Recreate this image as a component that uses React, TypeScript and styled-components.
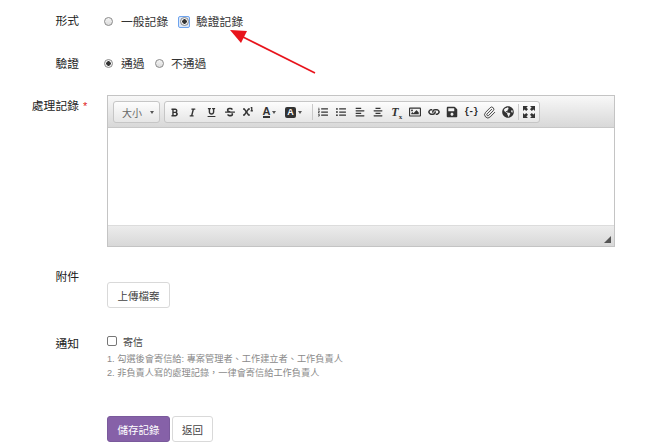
import styled, { createGlobalStyle } from "styled-components";
import {
  FaAlignCenter,
  FaAlignLeft,
  FaBold,
  FaGlobeAmericas,
  FaItalic,
  FaLink,
  FaListOl,
  FaListUl,
  FaRegImage,
  FaSave,
  FaStrikethrough,
  FaSuperscript,
  FaUnderline,
} from "react-icons/fa";
import { Paperclip } from "lucide-react";

const GlobalStyle = createGlobalStyle`
  html, body {
    margin: 0;
    padding: 0;
    background: #fff;
    overflow: hidden;
    font-family: "Liberation Sans", "Noto Sans CJK TC", sans-serif;
  }
`;

const Page = styled.div`
  position: relative;
  width: 647px;
  height: 447px;
  overflow: hidden;
`;

const Form = styled.form`
  display: flex;
  flex-direction: column;
  width: 615px;
  padding-top: 14px;
`;

const Row = styled.div<{ $h: number }>`
  display: grid;
  grid-template-columns: 79px 508px;
  column-gap: 28px;
  height: ${p => p.$h}px;
`;

const Label = styled.div<{ $top?: number }>`
  text-align: right;
  font-size: 11.8px;
  line-height: 15px;
  color: #222;
  position: relative;
  padding-top: ${p => p.$top ?? 0}px;
`;

const Required = styled.span`
  position: absolute;
  left: 83px;
  top: 4px;
  color: #e02020;
  font-size: 11px;
`;

const Options = styled.div`
  display: flex;
  align-items: center;
  height: 13px;
  margin-left: -3px;
`;

const Option = styled.label<{ $w: number; $gap?: number }>`
  display: flex;
  align-items: center;
  gap: ${p => p.$gap ?? 8}px;
  width: ${p => p.$w}px;
  font-size: 11.8px;
  color: #333;

  & > span {
    margin-top: 2px;
  }
`;

const Radio = styled.span<{ $on?: boolean }>`
  box-sizing: border-box;
  flex: none;
  width: 9px;
  height: 9px;
  border-radius: 50%;
  border: 1px solid #8a8a8a;
  background: ${p =>
    p.$on
      ? "radial-gradient(circle, #333 0 2px, #f2f2f2 2.5px)"
      : "linear-gradient(#f4f4f4, #dcdcdc)"};
`;

const FocusRing = styled.span`
  box-sizing: border-box;
  flex: none;
  display: flex;
  align-items: center;
  justify-content: center;
  width: 12px;
  height: 12px;
  border: 1px solid #6ea4ee;
  border-radius: 2px;
  background: #dbe8fa;
`;

const Editor = styled.div`
  box-sizing: border-box;
  height: 152px;
  display: flex;
  flex-direction: column;
  border: 1px solid #c4c4c4;
`;

const Toolbar = styled.div`
  box-sizing: border-box;
  display: flex;
  align-items: center;
  gap: 4px;
  height: 32px;
  padding: 1px 0 0 5px;
  background: linear-gradient(#f8f8f8, #d8d8d8);
  border-bottom: 1px solid #c8c8c8;
`;

const Group = styled.div`
  box-sizing: border-box;
  display: flex;
  align-items: center;
  height: 22px;
  border: 1px solid #c6c6c6;
  border-radius: 3px;
  background: linear-gradient(#fdfdfd, #e6e6e6);
  color: #333;
`;

const SizeSelect = styled(Group)`
  width: 47px;
  padding: 0 5px 0 8px;
  justify-content: space-between;
  font-size: 10px;
  color: #666;
`;

const Caret = styled.span`
  width: 0;
  height: 0;
  border-left: 2.5px solid transparent;
  border-right: 2.5px solid transparent;
  border-top: 3px solid #555;
`;

const Tool = styled.span<{ $w?: number }>`
  display: flex;
  align-items: center;
  justify-content: center;
  gap: 2px;
  width: ${p => p.$w ?? 18.5}px;
  height: 20px;
  flex: none;
  font-size: 10px;
`;

const Sep = styled.span<{ $left: number }>`
  width: 1px;
  height: 16px;
  margin: 0 1px 0 ${p => p.$left}px;
  background: #c9c9c9;
`;

const ColorA = styled.span`
  font-size: 11px;
  font-weight: 700;
  line-height: 10px;
  border-bottom: 2px solid #333;
`;

const BoxA = styled.span`
  width: 11px;
  height: 11px;
  border-radius: 2px;
  background: #333;
  color: #fff;
  font-size: 9px;
  font-weight: 700;
  line-height: 11px;
  text-align: center;
`;

const Braces = styled.span`
  font-size: 9px;
  font-weight: 700;
  font-family: "Liberation Mono", monospace;
  letter-spacing: -1px;
  color: #222;
`;

const ClearFormat = styled.span`
  font-family: "Liberation Serif", serif;
  font-style: italic;
  font-weight: 700;
  font-size: 12px;
  line-height: 12px;
  sub {
    font-size: 7px;
    font-style: normal;
    line-height: 0;
  }
`;

const ChainIcon = styled(FaLink)`
  transform: rotate(45deg);
`;

const EditArea = styled.div`
  flex: 1;
  background: #fff;
`;

const StatusBar = styled.div`
  box-sizing: border-box;
  display: flex;
  align-items: flex-end;
  justify-content: flex-end;
  height: 21px;
  padding: 0 3px 3px 0;
  background: linear-gradient(#ececec, #d8d8d8);
  border-top: 1px solid #dcdcdc;
`;

const Grip = styled.span`
  width: 0;
  height: 0;
  border-left: 7px solid transparent;
  border-bottom: 7px solid #555;
`;

const Button = styled.button<{ $w: number; $h: number; $primary?: boolean }>`
  box-sizing: border-box;
  width: ${p => p.$w}px;
  height: ${p => p.$h}px;
  padding: 0;
  border-radius: 3px;
  border: 1px solid ${p => (p.$primary ? "#7a5a9c" : "#d9d9d9")};
  background: ${p => (p.$primary ? "#8661a8" : "#fff")};
  color: ${p => (p.$primary ? "#fff" : "#444")};
  font-family: inherit;
  font-size: 10.5px;
`;

const UploadCell = styled.div`
  padding-top: 14px;
`;

const Check = styled.label`
  display: flex;
  align-items: center;
  height: 12px;
  font-size: 10px;
  color: #444;
`;

const Box = styled.span`
  box-sizing: border-box;
  width: 10px;
  height: 10px;
  margin-right: 6px;
  border: 1px solid #777;
  border-radius: 2px;
  background: #fff;
`;

const Help = styled.div`
  margin-top: 5px;
  font-size: 9.2px;
  line-height: 14px;
  color: #8a8a8a;
  white-space: nowrap;
`;

const Actions = styled.div`
  display: flex;
  gap: 2px;
`;

const Arrow = styled.svg`
  position: absolute;
  left: 225px;
  top: 25px;
`;

export default function App() {
  return (
    <Page>
      <GlobalStyle />
      <Form>
        <Row $h={42}>
          <Label>形式</Label>
          <Options>
            <Option $w={74}>
              <Radio />
              一般記錄
            </Option>
            <Option $w={80} $gap={6}>
              <FocusRing>
                <Radio $on />
              </FocusRing>
              驗證記錄
            </Option>
          </Options>
        </Row>
        <Row $h={39}>
          <Label $top={1}>驗證</Label>
          <Options>
            <Option $w={51}>
              <Radio $on />
              通過
            </Option>
            <Option $w={70} $gap={7}>
              <Radio />
              不通過
            </Option>
          </Options>
        </Row>
        <Row $h={173}>
          <Label $top={4}>
            處理記錄<Required>*</Required>
          </Label>
          <Editor>
            <Toolbar>
              <SizeSelect>
                大小
                <Caret />
              </SizeSelect>
              <Group>
                <Tool><FaBold size={9} /></Tool>
                <Tool><FaItalic size={9} /></Tool>
                <Tool><FaUnderline size={9} /></Tool>
                <Tool><FaStrikethrough size={10} /></Tool>
                <Tool><FaSuperscript size={10} /></Tool>
                <Tool $w={24}><ColorA>A</ColorA><Caret /></Tool>
                <Tool $w={24}><BoxA>A</BoxA><Caret /></Tool>
                <Sep $left={6} />
                <Tool><FaListOl size={10} /></Tool>
                <Tool><FaListUl size={10} /></Tool>
                <Tool><FaAlignLeft size={10} /></Tool>
                <Tool><FaAlignCenter size={10} /></Tool>
                <Tool><ClearFormat>T<sub>x</sub></ClearFormat></Tool>
                <Tool><FaRegImage size={12} /></Tool>
                <Tool><ChainIcon size={10} /></Tool>
                <Tool><FaSave size={12} /></Tool>
                <Tool><Braces>{"{-}"}</Braces></Tool>
                <Tool><Paperclip size={13} strokeWidth={1.6} /></Tool>
                <Tool><FaGlobeAmericas size={12} /></Tool>
                <Sep $left={1} />
                <Tool>
                  <svg width="12" height="12" viewBox="0 0 12 12" fill="#333">
                    <path d="M0 0h5L3.4 1.6 5 3.2 3.2 5 1.6 3.4 0 5z" />
                    <path d="M12 0v5l-1.6-1.6L8.800 5 7 3.200l1.600-1.600L7 0z" />
                    <path d="M0 12V7l1.600 1.600L3.200 7 5 8.800l-1.600 1.600L5 12z" />
                    <path d="M12 12H7l1.600-1.600L7 8.800 8.800 7l1.600 1.600L12 7z" />
                  </svg>
                </Tool>
              </Group>
            </Toolbar>
            <EditArea />
            <StatusBar>
              <Grip />
            </StatusBar>
          </Editor>
        </Row>
        <Row $h={67}>
          <Label $top={2}>附件</Label>
          <UploadCell>
            <Button type="button" $w={63} $h={26}>上傳檔案</Button>
          </UploadCell>
        </Row>
        <Row $h={81}>
          <Label $top={2}>通知</Label>
          <div>
            <Check>
              <Box />
              寄信
            </Check>
            <Help>
              1. 勾選後會寄信給: 專案管理者、工作建立者、工作負責人
              <br />
              2. 非負責人寫的處理記錄，一律會寄信給工作負責人
            </Help>
          </div>
        </Row>
        <Row $h={30}>
          <span />
          <Actions>
            <Button type="button" $w={63} $h={26} $primary>儲存記錄</Button>
            <Button type="button" $w={41} $h={26}>返回</Button>
          </Actions>
        </Row>
      </Form>
      <Arrow width="95" height="52" viewBox="0 0 95 52">
        <line x1="90" y1="48" x2="16" y2="11" stroke="#e8141c" strokeWidth="1.6" />
        <polygon points="5,5 22,6 16,18" fill="#e8141c" />
      </Arrow>
    </Page>
  );
}
